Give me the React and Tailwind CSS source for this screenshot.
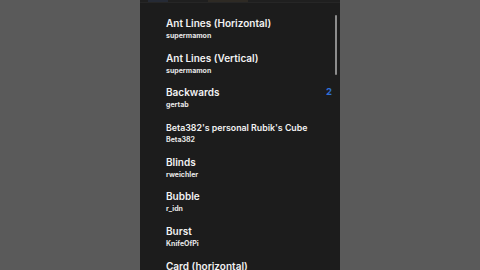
import React from 'react';

const items = [
    { title: 'Ant Lines (Horizontal)', author: 'supermamon' },
    { title: 'Ant Lines (Vertical)', author: 'supermamon' },
    { title: 'Backwards', author: 'gertab', count: 2 },
    { title: "Beta382's personal Rubik's Cube", author: 'Beta382', small: true },
    { title: 'Blinds', author: 'rweichler' },
    { title: 'Bubble', author: 'r_idn' },
    { title: 'Burst', author: 'KnifeOfPi' },
    { title: 'Card (horizontal)', author: '' },
];

const Row = ({ title, author, count, small }) => (
    <div className="h-[34.7px] shrink-0 flex items-start pl-[26px] pr-[8px]">
        <div className="flex-1 min-w-0">
            <div
                className={`${small ? 'text-[8.8px] leading-[12px] pt-[4px]' : 'text-[10px] leading-[14px] pt-[2px]'} font-semibold text-[#f2f2f2] whitespace-nowrap`}
            >
                {title}
            </div>
            {author && (
                <div className="text-[7px] leading-[10px] font-bold text-[#e6e6e6] mt-[1px]">{author}</div>
            )}
        </div>
        {count && (
            <span className="text-[9.5px] leading-[14px] pt-[2px] font-bold text-[#2f6fd8]">{count}</span>
        )}
    </div>
);

const App = () => {
    return (
        <div
            className="w-[480px] h-[270px] bg-[#5a5a5a] flex justify-center overflow-hidden"
            style={{ fontFamily: 'Inter, "Liberation Sans", sans-serif' }}
        >
            <div className="relative w-[200px] h-full bg-[#1c1c1c] flex flex-col overflow-hidden">
                <div className="h-[3px] shrink-0 bg-[#1f1f1f] border-b border-[#262626] flex gap-10 px-2">
                    <span className="w-5 h-[2px] bg-[#252a35]" />
                    <span className="w-10 h-[2px] bg-[#2e2a24]" />
                </div>
                <div className="flex flex-col pt-[11px]">
                    {items.map((it) => (
                        <Row key={it.title} {...it} />
                    ))}
                </div>
                <div className="absolute left-[195px] top-[15px] w-[2px] h-[60px] rounded-full bg-[#8c8c8c]" />
            </div>
        </div>
    );
};

export default App;
